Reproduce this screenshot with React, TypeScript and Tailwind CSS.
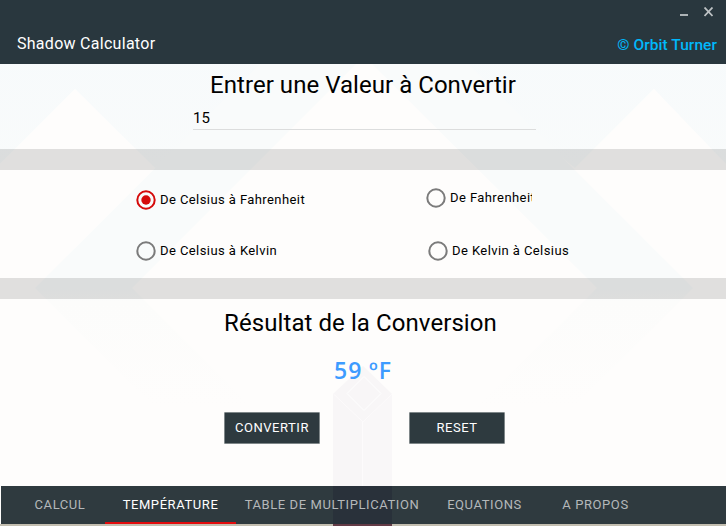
import { useState } from "react";

function Backdrop() {
  return (
    <svg className="absolute inset-0" width="726" height="526" viewBox="0 0 726 526" aria-hidden="true">
      <defs>
        <linearGradient id="sky" x1="0" y1="0" x2="0" y2="1">
          <stop offset="0" stopColor="#f6fafc" />
          <stop offset="1" stopColor="#f9fbfb" />
        </linearGradient>
        <linearGradient id="fade" x1="0" y1="0" x2="0" y2="1">
          <stop offset="0" stopColor="#f9fbfb" />
          <stop offset="0.06" stopColor="#fcfcfb" />
          <stop offset="0.5" stopColor="#fefdfc" />
        </linearGradient>
      </defs>
      <rect width="726" height="526" fill="#fefdfc" />
      <path d="M0 60H726V164L654 89L575 168L364 0L155 168L75 89L0 164Z" fill="url(#sky)" />
      <path d="M364 -40L693 288H35Z" fill="#f9fbfb" />
      <path d="M35 288H693L455 526H273Z" fill="url(#fade)" />
      <path d="M364 56L597 288L364 520L132 288Z" fill="#fefdfc" />
      <path d="M75 89L155 168L75 248L0 173V164Z" fill="#fefdfc" />
      <path d="M654 89L575 168L654 248L726 176V164Z" fill="#fefdfc" />
      <path d="M333 394L363 366L392 394V526H333Z" fill="#f8f6f7" />
      <path d="M363 422L392 394V526H363Z" fill="#f9f7f8" />
      <path d="M364 376.500L381 393.500L364 410.500L347 393.500Z" fill="none" stroke="#ffffff" />
      <path d="M333.500 394L363 422L392 394M362.500 422V486" fill="none" stroke="#fdfbfc" />
    </svg>
  );
}

interface OptionProps {
  label: string;
  checked: boolean;
  onSelect: () => void;
  className?: string;
  labelClass?: string;
}

function Option({ label, checked, onSelect, className = "", labelClass = "" }: OptionProps) {
  return (
    <button
      type="button"
      role="radio"
      aria-checked={checked}
      onClick={onSelect}
      className={`flex h-5 items-center gap-1 text-[13px] text-black ${className}`}
    >
      <svg width="20" height="20" viewBox="0 0 20 20" className="shrink-0">
        <circle cx="10" cy="10" r="8.700" fill="none" strokeWidth="2" stroke={checked ? "#d50a0a" : "#7b7b7b"} />
        {checked && <circle cx="10" cy="10" r="4.700" fill="#d50a0a" />}
      </svg>
      <span className={`whitespace-nowrap tracking-[0.42px] ${labelClass}`}>{label}</span>
    </button>
  );
}

const tabs = [
  { name: "CALCUL", box: "w-[118px]" },
  { name: "TEMPÉRATURE", box: "w-[131px]" },
  { name: "TABLE DE MULTIPLICATION", box: "w-[192px]" },
  { name: "EQUATIONS", box: "w-[113px]" },
  { name: "A PROPOS", box: "w-[109px]" },
];

export default function App() {
  const [mode, setMode] = useState(0);
  return (
    <div className="relative h-[526px] w-[726px] overflow-hidden font-['Roboto',sans-serif]">
      <Backdrop />
      <div className="relative flex h-full flex-col">
        <header className="flex h-16 shrink-0 flex-col bg-[#29373e]">
          <div className="flex h-6 justify-end gap-4 pt-[7px] pr-[13px]">
            <svg width="8" height="10" viewBox="0 0 8 10">
              <path d="M0 8H8" stroke="#adb3b6" strokeWidth="2" />
            </svg>
            <svg width="9" height="10" viewBox="0 0 9 10">
              <path d="M0.500 0.500L8.500 9M8.500 0.500L0.500 9" stroke="#bec3c5" strokeWidth="1.800" />
            </svg>
          </div>
          <div className="flex h-10 justify-between pr-[9px] pl-[17px]">
            <h1 className="pt-2 text-[16px] leading-6 tracking-[0.28px] whitespace-nowrap text-white">
              Shadow Calculator
            </h1>
            <span className="pt-[9px] text-[15.500px] leading-6 font-medium tracking-[0.06px] whitespace-nowrap text-[#00b8fb]">
              © Orbit Turner
            </span>
          </div>
        </header>

        <section className="flex h-[85px] shrink-0 flex-col items-center">
          <h2 className="mt-[5px] text-[24px] leading-8 tracking-[0.04px] whitespace-nowrap text-black">Entrer une Valeur à Convertir</h2>
          <div className="mt-[6px] ml-[3px] h-[23px] w-[343px] border-b border-[#dcdddd] text-[15px] leading-[22px] text-black">
            15
          </div>
        </section>
        <div className="h-[21px] shrink-0 bg-black/[0.118]" />

        <section role="radiogroup" className="grid h-[108px] shrink-0 grid-cols-[290px_1fr] grid-rows-[51px_1fr] pt-5 pl-[136px]">
          <Option label="De Celsius à Fahrenheit" checked={mode === 0} onSelect={() => setMode(0)} />
          <Option
            label="De Fahrenheit"
            checked={mode === 1}
            onSelect={() => setMode(1)}
            className="-mt-0.5"
            labelClass="w-[82px] overflow-hidden"
          />
          <Option label="De Celsius à Kelvin" checked={mode === 2} onSelect={() => setMode(2)} />
          <Option label="De Kelvin à Celsius" checked={mode === 3} onSelect={() => setMode(3)} className="ml-0.5" />
        </section>
        <div className="h-[21px] shrink-0 bg-black/[0.118]" />

        <section className="flex h-[187px] shrink-0 flex-col items-center">
          <h2 className="mt-2 mr-[5px] text-[24px] leading-8 tracking-[0.08px] whitespace-nowrap text-black">Résultat de la Conversion</h2>
          <p className="mt-[15px] font-['Open_Sans',sans-serif] text-[23px] leading-8 font-semibold tracking-[0.9px] whitespace-nowrap text-[#3d9bff]">
            59 ºF
          </p>
          <div className="mt-[26px] ml-[2px] flex gap-[89px]">
            <button className="h-8 w-24 rounded-[1px] border border-[#7f8789] bg-[#2e3a3f] pl-px text-[13px] tracking-[0.54px] text-white">
              CONVERTIR
            </button>
            <button className="h-8 w-24 rounded-[1px] border border-[#7f8789] bg-[#2e3a3f] pl-px text-[13px] tracking-[0.54px] text-white">
              RESET
            </button>
          </div>
        </section>

        <nav className="ml-px flex h-[38px] shrink-0 bg-[linear-gradient(90deg,#2f3a3f_332px,#29313a_332px,#29313a_391px,#2f3a3f_391px)]">
          {tabs.map((tab, i) => (
            <button
              key={tab.name}
              className={`flex shrink-0 items-center justify-center text-[13px] tracking-[0.58px] whitespace-nowrap ${tab.box} ${
                i === 1 ? "-ml-[14px] border-b-2 border-[#e20b0d] pt-0.5 text-white" : "text-[#b4b8ba]"
              }`}
            >
              {tab.name}
            </button>
          ))}
        </nav>
        <div className="h-0.5 shrink-0 bg-[linear-gradient(90deg,#c3beb0_333px,#633b46_333px,#633b46_392px,#c3beb0_392px)]" />
      </div>
    </div>
  );
}
